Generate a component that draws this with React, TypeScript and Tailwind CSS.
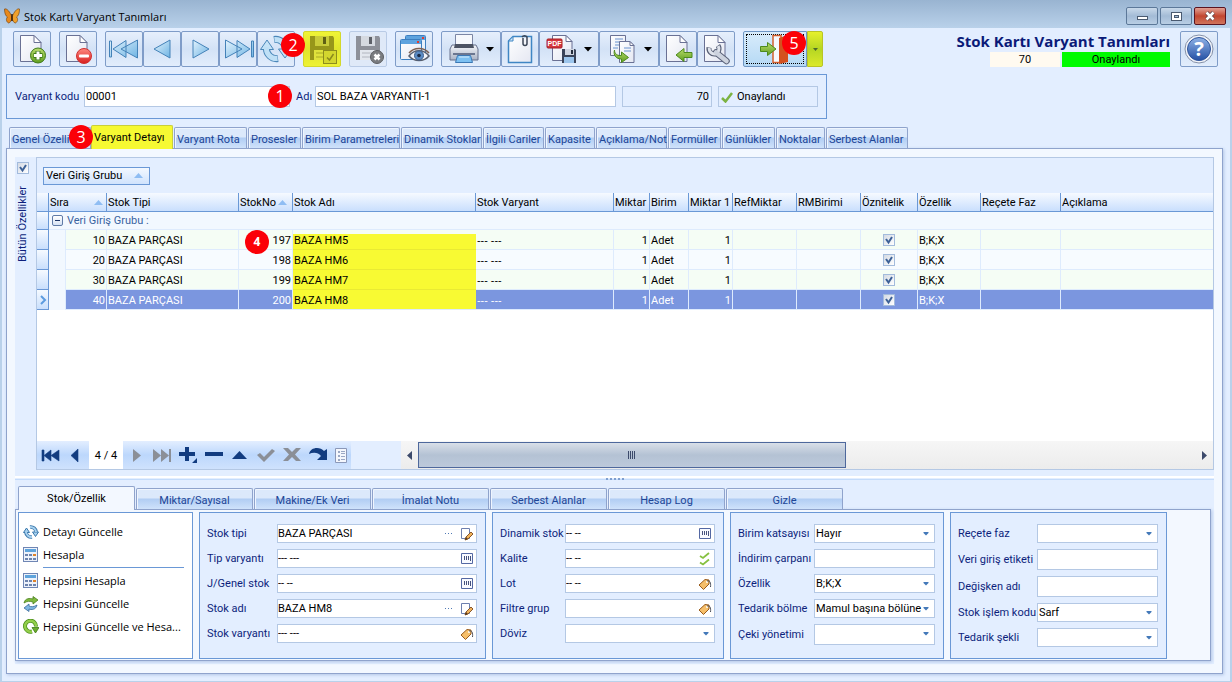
import { useState } from "react";
import type { ReactNode } from "react";
import clsx from "clsx";

const tabs = [
  { label: "Genel Özellikler", width: "w-[82px]" },
  { label: "Varyant Detayı", width: "w-[82px]" },
  { label: "Varyant Rota", width: "w-[73px]" },
  { label: "Prosesler", width: "w-[53px]" },
  { label: "Birim Parametreleri", width: "w-[98px]" },
  { label: "Dinamik Stoklar", width: "w-[81px]" },
  { label: "İlgili Cariler", width: "w-[61px]" },
  { label: "Kapasite", width: "w-[50px]" },
  { label: "Açıklama/Not", width: "w-[71px]" },
  { label: "Formüller", width: "w-[53px]" },
  { label: "Günlükler", width: "w-[53px]" },
  { label: "Noktalar", width: "w-[49px]" },
  { label: "Serbest Alanlar", width: "w-[82px]" },
];

const subTabs = [
  "Stok/Özellik",
  "Miktar/Sayısal",
  "Makine/Ek Veri",
  "İmalat Notu",
  "Serbest Alanlar",
  "Hesap Log",
  "Gizle",
];

const rows = [
  { sira: 10, no: 197, ad: "BAZA HM5" },
  { sira: 20, no: 198, ad: "BAZA HM6" },
  { sira: 30, no: 199, ad: "BAZA HM7" },
  { sira: 40, no: 200, ad: "BAZA HM8" },
];

/* ---------- icons ---------- */

function Gradients() {
  return (
    <svg width="0" height="0" className="absolute" aria-hidden="true">
      <defs>
        <linearGradient id="page" x1="0" y1="0" x2="1" y2="1">
          <stop offset="0" stopColor="#ffffff" />
          <stop offset="1" stopColor="#e4e7f2" />
        </linearGradient>
        <linearGradient id="sky" x1="0" y1="0" x2="1" y2="1">
          <stop offset="0" stopColor="#e3f3fd" />
          <stop offset="1" stopColor="#6db3e3" />
        </linearGradient>
        <linearGradient id="green" x1="0" y1="0" x2="0" y2="1">
          <stop offset="0" stopColor="#b9dc6c" />
          <stop offset="1" stopColor="#5f9e1f" />
        </linearGradient>
        <linearGradient id="red" x1="0" y1="0" x2="0" y2="1">
          <stop offset="0" stopColor="#ff8a80" />
          <stop offset="1" stopColor="#d81e1e" />
        </linearGradient>
        <linearGradient id="steel" x1="0" y1="0" x2="0" y2="1">
          <stop offset="0" stopColor="#f4f6fa" />
          <stop offset="1" stopColor="#a9b2c4" />
        </linearGradient>
        <linearGradient id="help" x1="0" y1="0" x2="0" y2="1">
          <stop offset="0" stopColor="#8fb2e6" />
          <stop offset="1" stopColor="#2450a4" />
        </linearGradient>
      </defs>
    </svg>
  );
}

function Icon({ size = 32, children }: { size?: number; children: ReactNode }) {
  return (
    <svg width={size} height={size} viewBox={`0 0 ${size} ${size}`} className="shrink-0" aria-hidden="true">
      {children}
    </svg>
  );
}

function Page() {
  return (
    <>
      <path d="M4.500 2.500H18l7 7V28.500H4.500z" fill="url(#page)" stroke="#6a7194" />
      <path d="M18 2.500v7h7z" fill="#fff" stroke="#6a7194" strokeLinejoin="round" />
    </>
  );
}

const NewIcon = () => (
  <Icon>
    <Page />
    <circle cx="22" cy="22.500" r="7.500" fill="url(#green)" stroke="#3f7a1a" />
    <path d="M22 18v9M17.500 22.500h9" stroke="#3f7a1a" strokeWidth="5" />
    <path d="M22 18.500v8M18 22.500h8" stroke="#fff" strokeWidth="3" />
  </Icon>
);

const DeleteIcon = () => (
  <Icon>
    <Page />
    <circle cx="22" cy="23" r="7.500" fill="url(#red)" stroke="#d03030" />
    <rect x="17" y="21.500" width="10" height="3" rx="1" fill="#fff" />
  </Icon>
);

const navPaths = {
  first: "M1.500 8v16h2V8zM5 16L18 7.500v17zM13 16l16.500-9v18z",
  prev: "M8 16l16-9v18z",
  next: "M25 16L9 7v18z",
  last: "M29.500 8v16h2V8zM28 16L15 7.500v17zM20 16L3.500 7v18z",
};

const NavIcon = ({ kind }: { kind: keyof typeof navPaths }) => (
  <Icon>
    <path d={navPaths[kind]} fill="url(#sky)" stroke="#4482b8" strokeLinejoin="round" />
  </Icon>
);

const RefreshIcon = () => (
  <Icon>
    <path d="M18 25.500A10 10 0 016.500 15M14 6.500A10 10 0 0125.500 17" fill="none" stroke="#4b87b9" strokeWidth="7" />
    <path d="M.5 16.500L7 7l6.500 9.500zM31.500 16L25 25l-6.500-9z" fill="#c5e3f7" stroke="#4b87b9" strokeLinejoin="round" />
    <path d="M17.500 25.500A10 10 0 016.500 14M14.500 6.500A10 10 0 0125.500 18" fill="none" stroke="#bfe0f6" strokeWidth="5" />
  </Icon>
);

const SaveIcon = () => (
  <Icon>
    <path d="M4 3h23l1 2v22H4z" fill="#97961a" />
    <path d="M9 3h14v10H9z" fill="#c9cb3a" />
    <path d="M17 4h3v7h-3z" fill="#5f5f14" />
    <path d="M8 17h16v10H8z" fill="#dfe23c" />
    <path d="M10 20h12M10 24h12" stroke="#a9aa24" />
    <rect x="17.500" y="17.500" width="13" height="13" fill="#d3d62e" stroke="#8d8d1c" />
    <path d="M21 24.500l2.500 2.500 4-6" fill="none" stroke="#8a8a1c" strokeWidth="1.500" />
  </Icon>
);

const SaveCancelIcon = () => (
  <Icon>
    <path d="M4 3h23l1 2v22H4z" fill="#8d9099" />
    <path d="M9 3h14v10H9z" fill="#d5d9e0" />
    <path d="M17 4h3v7h-3z" fill="#5d6068" />
    <path d="M8 17h16v10H8z" fill="#e3e7ee" />
    <path d="M10 20h12M10 24h12" stroke="#b2b6bf" />
    <circle cx="25" cy="24" r="6.500" fill="#7a7c80" stroke="#5c5e62" />
    <path d="M22.500 21.500l5 5M27.500 21.500l-5 5" stroke="#fff" strokeWidth="2.500" />
  </Icon>
);

const PreviewIcon = () => (
  <Icon>
    <rect x="7.500" y="2.500" width="20" height="18" rx="1" fill="#e8f1fb" stroke="#3d7fc0" />
    <path d="M8 3h19v4H8z" fill="#5ea3de" />
    <rect x="2.500" y="6.500" width="21" height="20" rx="1" fill="url(#page)" stroke="#3d7fc0" />
    <path d="M3 7h20v4H3z" fill="#5ea3de" />
    <path d="M24 4h2v2h-2zM19 8h2v2h-2z" fill="#e33b2e" />
    <path d="M11 23c5-7 15-7 20 0-5 6-15 6-20 0z" fill="#f3f6fb" stroke="#59606f" strokeWidth="1.500" />
    <circle cx="21" cy="22.500" r="4.500" fill="#5b8cc4" stroke="#3a5d8e" />
    <circle cx="21" cy="22.500" r="1.800" fill="#1c2c47" />
    <path d="M11 20c5-6 15-6 20 0" fill="none" stroke="#7d6152" strokeWidth="1.500" />
  </Icon>
);

const PrintIcon = () => (
  <Icon>
    <path d="M7.500 14V1.500h17V14" fill="#f6f8fc" stroke="#7b86a5" />
    <path d="M4 12h24l2 4v11H2V16z" fill="url(#steel)" stroke="#66708c" />
    <path d="M7 11h18l1 4H6z" fill="#4c5363" />
    <path d="M5 20h22v2H5z" fill="#6b7690" />
    <path d="M9.500 22.500h13l2 7h-17z" fill="#7cc0f2" stroke="#3b78b5" />
    <path d="M11 24h10" stroke="#d5ecfc" />
  </Icon>
);

const ClipIcon = () => (
  <Icon>
    <path d="M9 3.500h18.500v26h-23V8z" fill="url(#page)" stroke="#3f86c4" strokeWidth="1.500" />
    <path d="M9 3.500V8H4.500z" fill="#cfe6f8" stroke="#3f86c4" />
    <path d="M19 5v5.500a2 2 0 004 0V4a3 3 0 00-5 0" fill="none" stroke="#3c4657" strokeWidth="1.500" />
  </Icon>
);

const PdfIcon = () => (
  <Icon>
    <path d="M6.500 2.500H20l6 6v19H6.500z" fill="url(#page)" stroke="#6a7194" />
    <path d="M20 2.500v6h6z" fill="#fff" stroke="#6a7194" />
    <rect x="1" y="6" width="15" height="9" rx="1" fill="#d5363c" stroke="#a31d24" />
    <text x="8.500" y="13" textAnchor="middle" fontSize="7" fontWeight="700" fill="#fff" fontFamily="Liberation Sans, sans-serif">PDF</text>
    <path d="M16 16h13l1 1v13H16z" fill="#3a4358" />
    <path d="M19 16h9v6h-9z" fill="#cfd5e1" />
    <path d="M18 24h10v6H18z" fill="#9cc5ec" />
    <path d="M25 17h2v4h-2z" fill="#222a3a" />
  </Icon>
);

const CopyIcon = () => (
  <Icon>
    <path d="M4.500 2.500h15v20h-15z" fill="url(#page)" stroke="#6a7194" />
    <path d="M9 6h8M9 9h8M9 12h5M7 15h5" stroke="#6b93cf" />
    <path d="M13.500 8.500H24l4 4v17H13.500z" fill="url(#page)" stroke="#6a7194" />
    <path d="M24 8.500v4h4z" fill="#fff" stroke="#6a7194" />
    <path d="M18 15h7M18 18h7" stroke="#6b93cf" />
    <path d="M8.500 17c0 4 3 6 7 5.500V19l7 5.500-7 5V26C10 26 7 22 8.500 17z" fill="url(#green)" stroke="#4d8a1d" />
  </Icon>
);

const ImportIcon = () => (
  <Icon>
    <Page />
    <path d="M14 22l8-6.500v4h8v5h-8v4z" fill="url(#green)" stroke="#4d8a1d" strokeLinejoin="round" />
  </Icon>
);

const WrenchIcon = () => (
  <Icon>
    <Page />
    <path d="M9 14.500a5.500 5.500 0 006 6.500 5.500 5.500 0 003-8.500" fill="none" stroke="#596177" strokeWidth="5" />
    <path d="M16 19.500l10.500 8.500" stroke="#596177" strokeWidth="6.500" strokeLinecap="round" />
    <path d="M9.200 15a5.500 5.500 0 006 6 5.500 5.500 0 003-8" fill="none" stroke="#dfe3eb" strokeWidth="3" />
    <path d="M16 19.500l10.500 8.500" stroke="#cdd3de" strokeWidth="4.500" strokeLinecap="round" />
  </Icon>
);

const ExitIcon = () => (
  <Icon>
    <path d="M14 2.500h8v27h-8z" fill="#f6f8fd" stroke="#d4602e" strokeWidth="1.500" />
    <path d="M20 5l9-3v27l-9 2z" fill="#d4511f" />
    <path d="M1.500 13.500h7v-4l8.500 6.500-8.500 6.500v-4h-7z" fill="url(#green)" stroke="#4d8a1d" strokeLinejoin="round" />
  </Icon>
);

const HelpIcon = () => (
  <Icon>
    <circle cx="16" cy="16" r="14" fill="#f3f5fa" stroke="#8490a8" />
    <circle cx="16" cy="16" r="11.500" fill="url(#help)" stroke="#2f559c" />
    <text x="16" y="23" textAnchor="middle" fontSize="20" fontWeight="700" fill="#fff" fontFamily="Noto Sans, sans-serif">?</text>
  </Icon>
);

const ButterflyIcon = () => (
  <Icon size={16}>
    <path d="M8 9C6 4 3 0 .5 1c0 4 1 7 3 8-2 2-1 5 1 6 2 0 3-3 3.500-5z" fill="#e8891c" stroke="#6b3a0c" strokeWidth=".6" />
    <path d="M8 9c2-5 5-9 7.500-8 0 4-1 7-3 8 2 2 1 5-1 6-2 0-3-3-3.500-5z" fill="#f0a12c" stroke="#6b3a0c" strokeWidth=".6" />
    <path d="M8 6v7" stroke="#3a1f08" strokeWidth="1.500" />
  </Icon>
);

const CalcIcon = () => (
  <Icon size={16}>
    <rect x=".5" y=".5" width="14" height="14" fill="#edf2fb" stroke="#6f86b4" />
    <path d="M2 2h11v3H2z" fill="#5fa4dc" />
    <path d="M2 7h3v2H2zM6 7h3v2H6zM2 11h3v2H2zM6 11h3v2H6zM10 11h3v2h-3z" fill="#6d83ad" />
    <path d="M10 7h3v2h-3z" fill="#e0832a" />
  </Icon>
);

const SyncIcon = () => (
  <Icon size={16}>
    <path d="M9 13A5.500 5.500 0 012.800 8M7 3a5.500 5.500 0 016.200 5" fill="none" stroke="#3b78ac" strokeWidth="3.500" />
    <path d="M.5 8.500L3.500 4l3 4.500zM15.500 8l-3 4.500-3-4.500z" fill="#a9d2ef" stroke="#3b78ac" strokeLinejoin="round" />
    <path d="M9 13A5.500 5.500 0 013 8M7 3a5.500 5.500 0 016 5" fill="none" stroke="#a9d2ef" strokeWidth="2" />
  </Icon>
);

const SwapIcon = () => (
  <Icon size={16}>
    <path d="M1 7c1-5 6-5 9-4V.5L15 4l-5 4V6C7 5 4 5 1 7z" fill="#7fb93e" stroke="#4a7f1d" strokeWidth=".8" />
    <path d="M14 9c-1 5-6 5-8 4v2.500L1 12l5-4v2c2 1 5 1 8-1z" fill="#7fb6e2" stroke="#38699a" strokeWidth=".8" />
  </Icon>
);

const RecycleIcon = () => (
  <Icon size={16}>
    <path d="M9 12.500a5.500 5.500 0 114-5" fill="none" stroke="#4d8f1c" strokeWidth="4" />
    <path d="M9 12.500a5.500 5.500 0 114-5" fill="none" stroke="#93cf4a" strokeWidth="2.500" />
    <path d="M9 8.500h7L12.500 14z" fill="#6bad2c" stroke="#3d7a14" strokeWidth=".8" />
  </Icon>
);

const EditIcon = () => (
  <Icon size={14}>
    <path d="M1.500 1.500h8v10h-8z" fill="#fff" stroke="#6d7fae" />
    <path d="M5 13l1-3 5-5 2 2-5 5z" fill="#f0b25a" stroke="#7a4a1e" strokeWidth=".9" />
    <path d="M5 13l1-3 2 2z" fill="#5a3a1a" />
  </Icon>
);

const CodeIcon = () => (
  <Icon size={14}>
    <path d="M1.500 1.500h11v10h-11z" fill="#f8faff" stroke="#5468a3" />
    <path d="M4.500 4v4M6.500 4v4M8.500 4v4M10.500 4v5" stroke="#46517c" />
  </Icon>
);

const TagIcon = () => (
  <Icon size={14}>
    <path d="M1 8l6-5.500 4 .5v4l-5.500 5.500z" fill="#f6bf6a" stroke="#9a5c1d" strokeLinejoin="round" />
    <circle cx="9" cy="5" r="1" fill="#fff" />
    <path d="M9 4c3-1 4 2 3.500 6" fill="none" stroke="#4b4f5a" />
  </Icon>
);

const ChecksIcon = () => (
  <Icon size={14}>
    <path d="M2 4l3 2 6-5M2 10.500l3 2 6-5" fill="none" stroke="#86c140" strokeWidth="1.800" />
  </Icon>
);

const Caret = ({ color = "#000" }: { color?: string }) => (
  <svg width="8" height="5" viewBox="0 0 8 5" aria-hidden="true">
    <path d="M0 0h8L4 4.500z" fill={color} />
  </svg>
);

const SortArrow = () => (
  <svg width="9" height="5" viewBox="0 0 9 5" className="shrink-0" aria-hidden="true">
    <path d="M4.500 0L9 5H0z" fill="#8fbdf3" />
  </svg>
);

/* ---------- small controls ---------- */

function Badge({ children, className }: { children: ReactNode; className: string }) {
  return (
    <span
      className={clsx(
        "pointer-events-none absolute z-20 flex size-6 items-center justify-center rounded-full bg-[#fb0007] font-['Open_Sans','Noto_Sans',sans-serif] text-white",
        className
      )}
    >
      {children}
    </span>
  );
}

interface ToolButtonProps {
  title: string;
  children: ReactNode;
  menu?: boolean;
  className?: string;
}

function ToolButton({ title, children, menu, className }: ToolButtonProps) {
  return (
    <button
      type="button"
      title={title}
      aria-label={title}
      className={clsx(
        "relative flex h-9 shrink-0 items-center rounded-xs border",
        menu ? "w-[60px] justify-between pr-1.5 pl-1.5" : "w-[38px] justify-center",
        className ?? "border-[#7f9cc8] bg-linear-to-b from-[#e6effc] via-[#d3e2f6] to-[#e2edfc]"
      )}
    >
      {children}
      {menu && <Caret />}
    </button>
  );
}

function Check({ label }: { label: string }) {
  return (
    <span className="relative inline-flex size-3 align-middle">
      <input
        type="checkbox"
        defaultChecked
        aria-label={label}
        className="peer size-3 appearance-none border border-[#a3bbdc] bg-linear-to-br from-[#d4dae4] to-white"
      />
      <svg width="12" height="12" viewBox="0 0 12 12" className="pointer-events-none absolute inset-0 hidden peer-checked:block" aria-hidden="true">
        <path d="M3 5l2.500 3.500L9 3" fill="none" stroke="#3d6197" strokeWidth="2" />
      </svg>
    </span>
  );
}

interface FieldProps {
  id: string;
  label: string;
  labelWidth: string;
  value?: string;
  type?: "text" | "select";
  tall?: boolean;
  icon?: "edit" | "code" | "tag" | "checks";
}

function Field({ id, label, labelWidth, value = "", type = "text", tall, icon }: FieldProps) {
  const height = tall ? "h-[21px]" : "h-[19px]";

  return (
    <div className={clsx("flex items-center", height)}>
      <label htmlFor={id} className={clsx("shrink-0 whitespace-nowrap text-[#0d1f7c]", labelWidth)}>
        {label}
      </label>
      {type === "select" ? (
        <div className="relative h-full min-w-0 flex-1">
          <select
            id={id}
            defaultValue={value}
            className="size-full appearance-none border border-[#b4c8e4] bg-white pr-3 pl-px text-black"
          >
            <option>{value}</option>
          </select>
          <span className="pointer-events-none absolute top-2 right-1.5 flex">
            <svg width="6" height="4" viewBox="0 0 6 4" aria-hidden="true">
              <path d="M.5 0h5v1L3 3.500.5 1z" fill="#4479b9" />
            </svg>
          </span>
        </div>
      ) : (
        <div className="flex h-full min-w-0 flex-1 items-center border border-[#b4c8e4] bg-white pr-0.5">
          <input id={id} defaultValue={value} className="h-full min-w-0 flex-1 text-black outline-none" />
          {icon === "edit" && (
            <button type="button" aria-label={`${label} seç`} className="flex w-5 justify-center gap-0.5 pr-1">
              <span className="size-px bg-[#4f79b5]" />
              <span className="size-px bg-[#4f79b5]" />
              <span className="size-px bg-[#4f79b5]" />
            </button>
          )}
          {icon && (
            <button type="button" aria-label={`${label} aç`} className="flex">
              {icon === "edit" && <EditIcon />}
              {icon === "code" && <CodeIcon />}
              {icon === "tag" && <TagIcon />}
              {icon === "checks" && <ChecksIcon />}
            </button>
          )}
        </div>
      )}
    </div>
  );
}

function FieldBox({ className, children }: { className: string; children: ReactNode }) {
  return (
    <div className={clsx("flex shrink-0 flex-col gap-1.5 border border-[#6a98d6] bg-[#e3eeff] py-[11px] pr-2 pl-[7px]", className)}>
      {children}
    </div>
  );
}

function ActionItem({ icon, children }: { icon: ReactNode; children: ReactNode }) {
  return (
    <button
      type="button"
      className="flex h-[23px] w-full items-center gap-1 text-left font-['Open_Sans','Noto_Sans',sans-serif] whitespace-nowrap"
    >
      {icon}
      {children}
    </button>
  );
}

/* ---------- sections ---------- */

function TitleBar() {
  const button =
    "flex h-[18px] w-8 items-center justify-center rounded-xs border border-[#5c7899] bg-linear-to-b from-[#c9d9ea] via-[#a3bbd6] to-[#b9cee4]";

  return (
    <header className="flex h-7 items-center justify-between bg-linear-to-b from-[#99b4d1] to-[#b9d1ea] pt-1 pr-1.5 pl-1">
      <div className="flex items-center gap-1 font-['Open_Sans','Noto_Sans',sans-serif] text-black">
        <ButterflyIcon />
        <span>Stok Kartı Varyant Tanımları</span>
      </div>
      <div className="flex gap-0.5">
        <button type="button" aria-label="Küçült" className={button}>
          <span className="mt-1 h-1 w-[11px] border border-[#4a5a70] bg-white" />
        </button>
        <button type="button" aria-label="Büyüt" className={button}>
          <span className="flex h-[9px] w-[11px] items-center justify-center border border-[#4a5a70] bg-white">
            <span className="h-[3px] w-[5px] border border-[#4a5a70] bg-[#a3bbd6]" />
          </span>
        </button>
        <button
          type="button"
          aria-label="Kapat"
          className="flex h-[18px] w-8 items-center justify-center rounded-xs border border-[#5b1420] bg-linear-to-b from-[#e0a094] via-[#c2452f] to-[#d0745c]"
        >
          <svg width="12" height="10" viewBox="0 0 12 10" aria-hidden="true">
            <path d="M2.500 1.500l7 7M9.500 1.500l-7 7" stroke="#5a4348" strokeWidth="4" />
            <path d="M2.500 1.500l7 7M9.500 1.500l-7 7" stroke="#fff" strokeWidth="2.500" />
          </svg>
        </button>
      </div>
    </header>
  );
}

function Toolbar() {
  return (
    <div className="flex items-start justify-between pr-3 pl-[11px]">
      <div className="flex gap-2">
        <ToolButton title="Yeni"><NewIcon /></ToolButton>
        <ToolButton title="Sil"><DeleteIcon /></ToolButton>
        <div className="flex">
          <ToolButton title="İlk"><NavIcon kind="first" /></ToolButton>
          <ToolButton title="Önceki"><NavIcon kind="prev" /></ToolButton>
          <ToolButton title="Sonraki"><NavIcon kind="next" /></ToolButton>
          <ToolButton title="Son"><NavIcon kind="last" /></ToolButton>
          <ToolButton title="Yenile">
            <RefreshIcon />
            <Badge className="top-px left-[23px] text-base">2</Badge>
          </ToolButton>
        </div>
        <ToolButton title="Kaydet" className="border-[#d3d82c] bg-linear-to-b from-[#f0f436] via-[#dfe42c] to-[#eef234]">
          <SaveIcon />
        </ToolButton>
        <ToolButton title="Vazgeç" className="border-[#b9cbe6] bg-[#dfe9f8]">
          <SaveCancelIcon />
        </ToolButton>
        <ToolButton title="Önizleme"><PreviewIcon /></ToolButton>
        <div className="flex">
          <ToolButton title="Yazdır" menu><PrintIcon /></ToolButton>
          <ToolButton title="Ekler"><ClipIcon /></ToolButton>
          <ToolButton title="PDF" menu><PdfIcon /></ToolButton>
          <ToolButton title="Kopyala" menu><CopyIcon /></ToolButton>
          <ToolButton title="İçe aktar"><ImportIcon /></ToolButton>
          <ToolButton title="Ayarlar"><WrenchIcon /></ToolButton>
        </div>
        <div className="flex">
          <button
            type="button"
            aria-label="Çıkış"
            className="relative flex h-9 w-16 items-center rounded-l-xs border border-[#6f96c4] bg-linear-to-b from-[#d9ecfb] to-[#b5d9f5] p-0.5"
          >
            <span className="flex h-full w-full items-center justify-center border border-dotted border-black">
              <ExitIcon />
            </span>
            <Badge className="-top-px left-[38px] text-base">5</Badge>
          </button>
          <button
            type="button"
            aria-label="Çıkış seçenekleri"
            className="flex h-9 w-4 items-center justify-center rounded-r-xs border border-[#b9c425] bg-linear-to-b from-[#e6f02c] via-[#b5d623] to-[#dbe92a]"
          >
            <svg width="5" height="3" viewBox="0 0 5 3" aria-hidden="true">
              <path d="M0 0h5L2.500 3z" fill="#4c6a2a" />
            </svg>
          </button>
        </div>
      </div>
      <div className="flex items-start gap-2.5">
        <div className="flex flex-col items-end">
          <h1 className="h-[21px] font-['Open_Sans','Noto_Sans',sans-serif] text-[15px] leading-5 font-bold whitespace-nowrap text-[#0a1a78]">
            Stok Kartı Varyant Tanımları
          </h1>
          <div className="flex gap-0.5 text-center leading-[15px]">
            <span className="w-[70px] bg-[#fffaf0]">70</span>
            <span className="w-[108px] bg-[#00fb00]">Onaylandı</span>
          </div>
        </div>
        <ToolButton title="Yardım"><HelpIcon /></ToolButton>
      </div>
    </div>
  );
}

function Heading() {
  const box = "h-[21px] shrink-0 border border-[#b4c8e4]";

  return (
    <div className="mt-[7px] ml-1 flex h-[45px] w-[821px] items-center gap-1.5 border border-[#6a98d6] pl-2">
      <div className="relative flex items-center">
        <label htmlFor="kod" className="w-[69px] text-[#0d1f7c]">Varyant kodu</label>
        <input id="kod" defaultValue="00001" className={clsx(box, "w-[206px] bg-white px-px")} />
        <Badge className="top-[-2px] left-[253px] text-base">1</Badge>
      </div>
      <div className="flex items-center">
        <label htmlFor="adi" className="w-[19px] text-[#0d1f7c]">Adı</label>
        <input id="adi" defaultValue="SOL BAZA VARYANTI-1" className={clsx(box, "w-[301px] bg-white px-px")} />
      </div>
      <input aria-label="No" readOnly value="70" className={clsx(box, "w-[90px] px-0.5 text-right")} />
      <div className={clsx(box, "flex w-[100px] items-center gap-1 px-0.5")}>
        <svg width="12" height="12" viewBox="0 0 12 12" aria-hidden="true">
          <path d="M1 7l3.500 3.500L11 2" fill="none" stroke="#7cb342" strokeWidth="2.500" />
        </svg>
        <span>Onaylandı</span>
      </div>
    </div>
  );
}

function VariantTable() {
  const th =
    "h-[19px] overflow-hidden border-r border-b border-[#6a98d6] bg-linear-to-b from-[#f6faff] to-[#c9dffd] px-px text-left font-normal whitespace-nowrap";
  const marker = "border-r border-b border-[#6a98d6] bg-linear-to-b from-[#f6faff] to-[#c9dffd]";

  return (
    <table className="w-full table-fixed border-separate border-spacing-0">
      <colgroup>
        <col className="w-3" />
        <col className="w-[17px]" />
        <col className="w-[41px]" />
        <col className="w-[132px]" />
        <col className="w-[54px]" />
        <col className="w-[183px]" />
        <col className="w-[138px]" />
        <col className="w-9" />
        <col className="w-[39px]" />
        <col className="w-11" />
        <col className="w-16" />
        <col className="w-16" />
        <col className="w-[57px]" />
        <col className="w-[63px]" />
        <col className="w-20" />
        <col />
      </colgroup>
      <thead>
        <tr>
          <th className={th} />
          <th className={th} colSpan={2}>
            <span className="flex items-center justify-between pr-0.5">Sıra <SortArrow /></span>
          </th>
          <th className={th}>Stok Tipi</th>
          <th className={th}>
            <span className="flex items-center justify-between pr-1">StokNo <SortArrow /></span>
          </th>
          <th className={th}>Stok Adı</th>
          <th className={th}>Stok Varyant</th>
          <th className={th}>Miktar</th>
          <th className={th}>Birim</th>
          <th className={th}>Miktar 1</th>
          <th className={th}>RefMiktar</th>
          <th className={th}>RMBirimi</th>
          <th className={th}>Öznitelik</th>
          <th className={th}>Özellik</th>
          <th className={th}>Reçete Faz</th>
          <th className={clsx(th, "border-r-0")}>Açıklama</th>
        </tr>
      </thead>
      <tbody>
        <tr className="h-[18px]">
          <td className={marker} />
          <td colSpan={15} className="border-b border-[#deebfd] bg-[#f2f8ff] p-0 text-[#39639f]">
            <span className="flex items-center gap-1 pl-[3px]">
              <button
                type="button"
                aria-label="Grubu kapat"
                className="flex size-[11px] items-center justify-center rounded-xs border border-[#5f7ba8] bg-linear-to-b from-white to-[#d5e2f4]"
              >
                <span className="h-px w-[5px] bg-[#1c3566]" />
              </button>
              Veri Giriş Grubu :
            </span>
          </td>
        </tr>
        {rows.map((row, i) => {
          const selected = i === rows.length - 1;
          const td = clsx(
            "h-5 overflow-hidden border-r border-b border-[#deebfd] px-px pt-px pb-0 whitespace-nowrap",
            selected ? "bg-[#7b96df] text-white" : i % 2 === 0 ? "bg-[#f5fdf5]" : "bg-[#f7fbff]"
          );
          return (
            <tr key={row.sira}>
              <td className={clsx(marker, "p-0")}>
                {selected && (
                  <svg width="8" height="10" viewBox="0 0 8 10" className="ml-0.5" aria-hidden="true">
                    <path d="M2 1l4 4-4 4" fill="none" stroke="#5b9be0" strokeWidth="2" />
                  </svg>
                )}
              </td>
              <td className="border-r border-[#deebfd] bg-[#f2f8ff]" />
              <td className={clsx(td, "text-right")}>{row.sira}</td>
              <td className={td}>BAZA PARÇASI</td>
              <td className={clsx(td, "relative overflow-visible text-right")}>
                {row.no}
                {i === 0 && <Badge className="top-0 left-[6px] text-xs font-bold">4</Badge>}
              </td>
              <td
                className={clsx(
                  "h-5 border-b px-px pt-px pb-0 text-black",
                  i === 0
                    ? "border-[#e9ea33] bg-[linear-gradient(#f5fdf5_4px,#f8fa33_4px)]"
                    : selected
                      ? "border-[#deebfd] bg-[#f8fa33]"
                      : "border-[#e9ea33] bg-[#f8fa33]"
                )}
              >
                {row.ad}
              </td>
              <td className={clsx(td, "font-['DejaVu_Sans_Condensed','DejaVu_Sans',sans-serif]")}>--- ---</td>
              <td className={clsx(td, "text-right")}>1</td>
              <td className={td}>Adet</td>
              <td className={clsx(td, "text-right")}>1</td>
              <td className={td} />
              <td className={td} />
              <td className={clsx(td, "text-center leading-none")}><Check label={`Öznitelik ${row.sira}`} /></td>
              <td className={td}>B;K;X</td>
              <td className={td} />
              <td className={clsx(td, "border-r-0")} />
            </tr>
          );
        })}
      </tbody>
    </table>
  );
}

const recordButtons = [
  { label: "İlk kayıt", color: "#123c80", d: "M1 3h2v11H1zM3 8.500L10 3v11zM10 8.500L18 3v11z" },
  { label: "Önceki kayıt", color: "#123c80", d: "M4 8.500L11 2v13z" },
];

const recordActions = [
  { label: "Sonraki kayıt", color: "#8b8f97", d: "M6 2v13l8-6.500z" },
  { label: "Son kayıt", color: "#8b8f97", d: "M0 2v13l8-6.500zM8 2v13l8-6.500zM16 2h2v13h-2z" },
  { label: "Ekle", color: "#123c80", d: "M6 0h4v5h6v4h-6v5H6V9H0V5h6zM18 11v5h-5z" },
  { label: "Çıkar", color: "#123c80", d: "M0 5h18v4H0z" },
  { label: "Düzenle", color: "#123c80", d: "M8.500 4L16 12H1z" },
  { label: "Onayla", color: "#8b8f97", d: "M0 8l3-2 4 4 8-8 3 2L7 15z" },
  { label: "İptal", color: "#8b8f97", d: "M0 1h5l4 4 4-4h5l-6 6.500L18 14h-5l-4-4-4 4H0l6-6.500z" },
  { label: "Tazele", color: "#123c80", d: "M0 7c1-7 11-8 15-3l3-2v11H8l4-4c-3-4-8-4-12-2z" },
];

function RecordBar() {
  return (
    <div className="flex h-7 items-stretch">
      <div className="flex items-center bg-linear-to-b from-[#e3eeff] via-[#bcd7fc] to-[#cfe2fd]">
        {recordButtons.map((b) => (
          <button key={b.label} type="button" aria-label={b.label} className="flex w-[26px] justify-center">
            <svg width="19" height="17" viewBox="0 0 19 17" aria-hidden="true">
              <path d={b.d} fill={b.color} stroke={b.color} strokeWidth=".6" />
            </svg>
          </button>
        ))}
        <span className="flex h-full w-[34px] items-center justify-center bg-white">4 / 4</span>
        {recordActions.map((b) => (
          <button key={b.label} type="button" aria-label={b.label} className="flex w-[26px] justify-center">
            <svg width="19" height="17" viewBox="0 0 19 17" aria-hidden="true">
              <path d={b.d} fill={b.color} />
            </svg>
          </button>
        ))}
        <button type="button" aria-label="Görünüm" className="flex w-5 justify-center">
          <svg width="12" height="15" viewBox="0 0 12 15" aria-hidden="true">
            <path d="M.5.5h11v14H.5z" fill="#f4f7fd" stroke="#8b98b8" />
            <path d="M3 3h2v2H3zM3 7h2v2H3zM3 11h2v2H3zM6 3h4v1H6zM6 5h4v1H6zM6 8h4v1H6zM6 11h4v1H6z" fill="#9aa8c5" />
          </svg>
        </button>
      </div>
      <div className="w-[50px] shrink-0 bg-[#e3eeff]" />
      <div className="flex min-w-0 flex-1 items-center bg-linear-to-b from-[#f6f6f6] to-[#ececec]">
        <button type="button" aria-label="Sola kaydır" className="flex w-[17px] shrink-0 justify-center">
          <svg width="5" height="9" viewBox="0 0 5 9" aria-hidden="true">
            <path d="M5 0v9L0 4.500z" fill="#3c4a6b" />
          </svg>
        </button>
        <div className="flex h-full min-w-0 flex-1 items-center">
          <div className="flex h-[26px] w-[55%] items-center justify-center gap-px border border-[#4e689c] bg-linear-to-b from-[#d9dfe8] via-[#b4c2d4] to-[#bcc9db]">
            <span className="h-2 w-px bg-[#3c4a6b]" />
            <span className="h-2 w-px bg-[#3c4a6b]" />
            <span className="h-2 w-px bg-[#3c4a6b]" />
            <span className="h-2 w-px bg-[#3c4a6b]" />
          </div>
        </div>
        <button type="button" aria-label="Sağa kaydır" className="flex w-[17px] shrink-0 justify-center">
          <svg width="5" height="9" viewBox="0 0 5 9" aria-hidden="true">
            <path d="M0 0v9l5-4.500z" fill="#3c4a6b" />
          </svg>
        </button>
      </div>
    </div>
  );
}

function DetailPanel() {
  return (
    <div className="mr-[3px] flex gap-1.5 border border-[#8fa3cc] bg-[#f3f8ff] px-0.5 pt-0.5 pb-px shadow-[1px_1px_3px_#b3c6e6]">
      <div className="w-[175px] shrink-0 border border-[#6a98d6] bg-white px-1 pt-[7px]">
        <ActionItem icon={<SyncIcon />}>Detayı Güncelle</ActionItem>
        <ActionItem icon={<CalcIcon />}>Hesapla</ActionItem>
        <hr className="my-px mr-1 ml-5 border-[#6a98d6]" />
        <ActionItem icon={<CalcIcon />}>Hepsini Hesapla</ActionItem>
        <ActionItem icon={<SwapIcon />}>Hepsini Güncelle</ActionItem>
        <ActionItem icon={<RecycleIcon />}>Hepsini Güncelle ve Hesa...</ActionItem>
      </div>
      <FieldBox className="w-[287px]">
        <Field id="stok-tipi" label="Stok tipi" labelWidth="w-[70px]" value="BAZA PARÇASI" icon="edit" />
        <Field id="tip-varyanti" label="Tip varyantı" labelWidth="w-[70px]" value="--- ---" icon="code" />
        <Field id="genel-stok" label="J/Genel stok" labelWidth="w-[70px]" value="-- --" icon="code" />
        <Field id="stok-adi" label="Stok adı" labelWidth="w-[70px]" value="BAZA HM8" icon="edit" />
        <Field id="stok-varyanti" label="Stok varyantı" labelWidth="w-[70px]" value="--- ---" icon="tag" />
      </FieldBox>
      <FieldBox className="w-[232px]">
        <Field id="dinamik-stok" label="Dinamik stok" labelWidth="w-[65px]" value="-- --" icon="code" />
        <Field id="kalite" label="Kalite" labelWidth="w-[65px]" value="-- --" icon="checks" />
        <Field id="lot" label="Lot" labelWidth="w-[65px]" value="-- --" icon="tag" />
        <Field id="filtre" label="Filtre grup" labelWidth="w-[65px]" icon="tag" />
        <Field id="doviz" label="Döviz" labelWidth="w-[65px]" type="select" />
      </FieldBox>
      <FieldBox className="w-[214px]">
        <Field id="katsayi" label="Birim katsayısı" labelWidth="w-[76px]" value="Hayır" type="select" />
        <Field id="indirim" label="İndirim çarpanı" labelWidth="w-[76px]" />
        <Field id="ozellik" label="Özellik" labelWidth="w-[76px]" value="B;K;X" type="select" />
        <Field id="bolme" label="Tedarik bölme" labelWidth="w-[76px]" value="Mamul başına bölüne" type="select" />
        <Field id="ceki" label="Çeki yönetimi" labelWidth="w-[76px]" type="select" tall />
      </FieldBox>
      <FieldBox className="w-[217px]">
        <Field id="faz" label="Reçete faz" labelWidth="w-[79px]" type="select" />
        <Field id="etiket" label="Veri giriş etiketi" labelWidth="w-[79px]" tall />
        <Field id="degisken" label="Değişken adı" labelWidth="w-[79px]" tall />
        <Field id="islem" label="Stok işlem kodu" labelWidth="w-[79px]" value="Sarf" type="select" />
        <Field id="tedarik" label="Tedarik şekli" labelWidth="w-[79px]" type="select" />
      </FieldBox>
    </div>
  );
}

export default function App() {
  const [tab, setTab] = useState(1);
  const [subTab, setSubTab] = useState(0);

  const idleTab =
    "border-[#8fa3cc] bg-linear-to-b from-[#dce9fb] from-45% via-[#b1cdf3] via-50% to-[#cfe2fb] text-[#1c4596] shadow-[inset_1px_1px_0_#eff5fe]";

  return (
    <div className="flex min-h-screen w-full flex-col bg-[#e3eeff] font-[Roboto,'Noto_Sans',sans-serif] text-[11px] leading-[15px] text-black">
      <Gradients />
      <TitleBar />
      <main className="flex flex-1 flex-col border-x-2 border-b border-[#b9d1ea] pt-[3px]">
        <Toolbar />
        <Heading />

        <div role="tablist" className="relative z-10 mt-1.5 -mb-px ml-[7px] flex h-6 items-end">
          {tabs.map((t, i) => (
            <button
              key={t.label}
              type="button"
              role="tab"
              aria-selected={tab === i}
              onClick={() => setTab(i)}
              className={clsx(
                "flex shrink-0 items-center rounded-t-xs border pl-0.5 whitespace-nowrap",
                t.width,
                i > 1 && "ml-px",
                tab === i ? "h-6 border-b-0 border-[#c9cf3a] bg-[#f6f932] text-black" : "mb-px h-[21px] border-b-0 pt-0.5",
                tab !== i && idleTab
              )}
            >
              {t.label}
            </button>
          ))}
          <Badge className="top-0 left-[60px] text-base">3</Badge>
        </div>

        <section className="mr-[7px] mb-[7px] ml-1 flex flex-1 flex-col border border-[#8fa3cc] bg-[#f3f8ff] px-2 pt-2 pb-[9px] shadow-[1px_1px_3px_#b3c6e6]">
          <div className="flex flex-1 flex-col bg-[#e3eeff]">
            <div className="flex flex-1">
              <div className="flex w-[21px] shrink-0 flex-col items-center gap-3 pt-[5px] pr-1.5">
                <Check label="Bütün Özellikler" />
                <span className="rotate-180 text-[#0d1f7c] [writing-mode:vertical-rl]">Bütün Özellikler</span>
              </div>
              <div className="flex min-w-0 flex-1 flex-col border border-[#b4c8e4] bg-white">
                <div className="flex h-[35px] items-center bg-[#e3eeff] pl-1.5">
                  <button
                    type="button"
                    className="flex h-[18px] w-[107px] items-center justify-between border border-[#6a98d6] bg-linear-to-b from-[#f3f8ff] to-[#d0e3fd] pr-1.5 pl-0.5"
                  >
                    Veri Giriş Grubu
                    <SortArrow />
                  </button>
                </div>
                <VariantTable />
                <div className="flex-1" />
                <RecordBar />
              </div>
            </div>

            <div className="flex h-4 flex-col items-center pt-1.5">
              <div className="h-0.5 w-full bg-white" />
              <div className="flex h-0.5 w-full items-start justify-center gap-0.5 border-b border-[#c3dbfb]">
                <span className="size-0.5 bg-[#7f9fd0]" />
                <span className="size-0.5 bg-[#7f9fd0]" />
                <span className="size-0.5 bg-[#7f9fd0]" />
                <span className="size-0.5 bg-[#7f9fd0]" />
                <span className="size-0.5 bg-[#7f9fd0]" />
              </div>
            </div>

            <div role="tablist" className="relative z-10 -mb-px ml-[3px] flex h-6 items-end gap-px">
              {subTabs.map((label, i) => (
                <button
                  key={label}
                  type="button"
                  role="tab"
                  aria-selected={subTab === i}
                  onClick={() => setSubTab(i)}
                  className={clsx(
                    "w-[117px] shrink-0 rounded-t-xs border border-b-0 text-center",
                    subTab === i ? "h-6 border-[#8fa3cc] bg-[#f3f8ff] text-black" : "mb-px h-[21px] pt-0.5",
                    subTab !== i && idleTab
                  )}
                >
                  {label}
                </button>
              ))}
            </div>
            <DetailPanel />
            <div className="h-[3px]" />
          </div>
        </section>
      </main>
    </div>
  );
}
